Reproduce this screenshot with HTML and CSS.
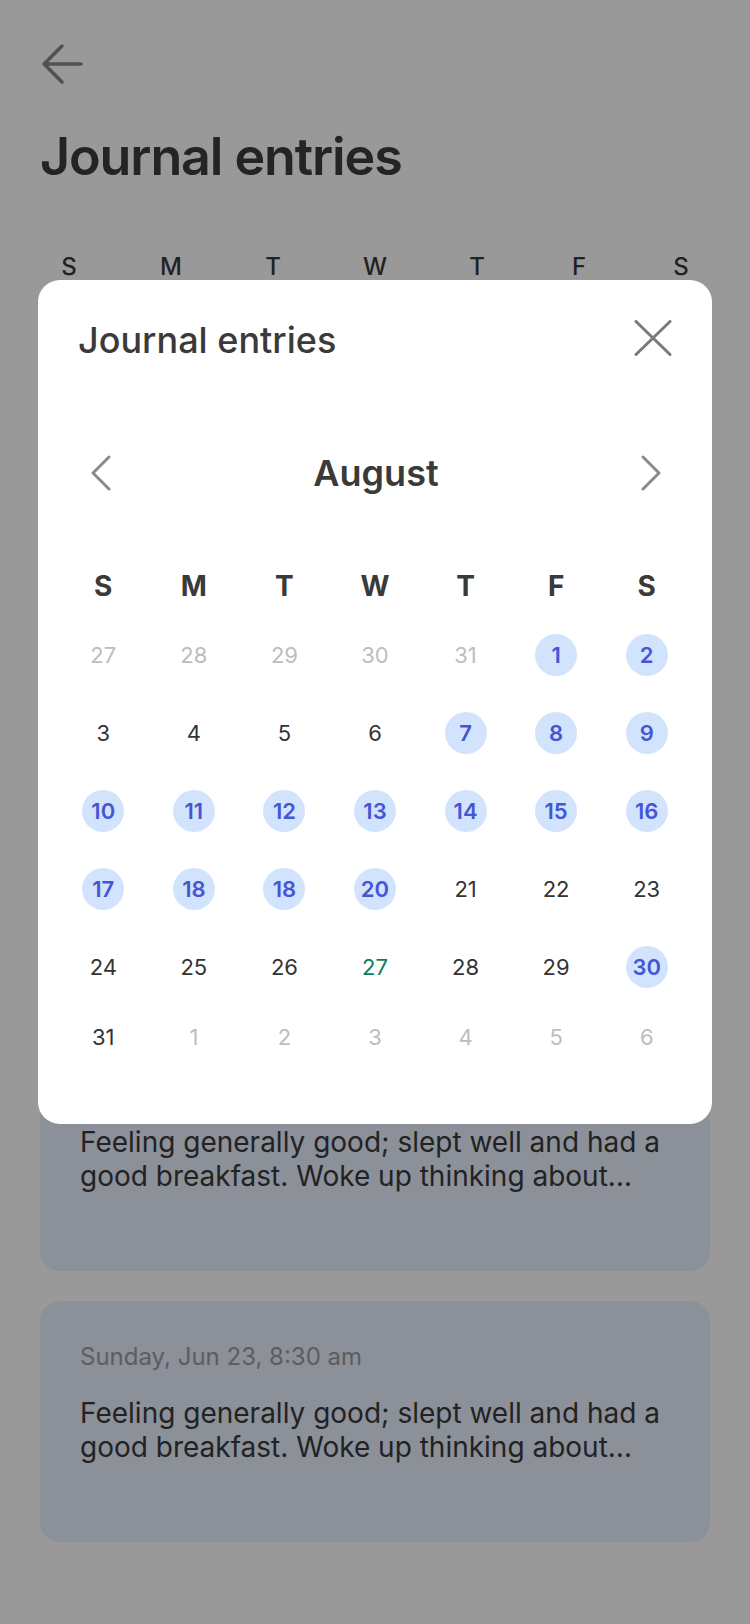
FILE: index.html
```html
<!DOCTYPE html>
<html lang="en">
<head>
<meta charset="utf-8">
<title>Journal entries</title>
<link rel="stylesheet" href="styles.css">
</head>
<body>
<div class="page">
  <header class="topbar">
    <button class="icon-btn back" aria-label="Back">
      <svg width="48" height="48" viewBox="0 0 48 48" fill="none" stroke="currentColor" stroke-width="3.5" stroke-linecap="round" stroke-linejoin="round"><path d="M22 6 L4 24 L22 42 M4 24 H41"/></svg>
    </button>
  </header>
  <h1 class="title">Journal entries</h1>
  <div class="week">
    <span>S</span><span>M</span><span>T</span><span>W</span><span>T</span><span>F</span><span>S</span>
  </div>
  <section class="entries">
    <article class="entry">
      <p class="entry-date">Monday, Jun 24, 8:45 am</p>
      <p class="entry-text">Feeling generally good; slept well and had a good breakfast. Woke up thinking about…</p>
    </article>
    <article class="entry">
      <p class="entry-date">Sunday, Jun 23, 8:30 am</p>
      <p class="entry-text">Feeling generally good; slept well and had a good breakfast. Woke up thinking about…</p>
    </article>
  </section>
</div>

<div class="scrim"></div>

<div class="modal" role="dialog" aria-label="Journal entries">
  <div class="modal-head">
    <h2 class="modal-title">Journal entries</h2>
    <button class="icon-btn close" aria-label="Close">
      <svg width="38" height="36" viewBox="0 0 38 36" fill="none" stroke="currentColor" stroke-width="3" stroke-linecap="round"><path d="M2 1.5 L36 34.5 M36 1.5 L2 34.5"/></svg>
    </button>
  </div>
  <div class="month-nav">
    <button class="icon-btn chev" aria-label="Previous month">
      <svg width="22" height="36" viewBox="0 0 22 36" fill="none" stroke="currentColor" stroke-width="3" stroke-linecap="round" stroke-linejoin="round"><path d="M19 2 L3 18 L19 34"/></svg>
    </button>
    <div class="month">August</div>
    <button class="icon-btn chev" aria-label="Next month">
      <svg width="22" height="36" viewBox="0 0 22 36" fill="none" stroke="currentColor" stroke-width="3" stroke-linecap="round" stroke-linejoin="round"><path d="M3 2 L19 18 L3 34"/></svg>
    </button>
  </div>
  <div class="cal-head">
    <span>S</span><span>M</span><span>T</span><span>W</span><span>T</span><span>F</span><span>S</span>
  </div>
  <div class="cal-grid">
    <span class="day muted">27</span><span class="day muted">28</span><span class="day muted">29</span><span class="day muted">30</span><span class="day muted">31</span><span class="day has">1</span><span class="day has">2</span>
    <span class="day">3</span><span class="day">4</span><span class="day">5</span><span class="day">6</span><span class="day has">7</span><span class="day has">8</span><span class="day has">9</span>
    <span class="day has">10</span><span class="day has">11</span><span class="day has">12</span><span class="day has">13</span><span class="day has">14</span><span class="day has">15</span><span class="day has">16</span>
    <span class="day has">17</span><span class="day has">18</span><span class="day has">18</span><span class="day has">20</span><span class="day">21</span><span class="day">22</span><span class="day">23</span>
    <span class="day">24</span><span class="day">25</span><span class="day">26</span><span class="day today">27</span><span class="day">28</span><span class="day">29</span><span class="day has">30</span>
    <span class="day">31</span><span class="day muted">1</span><span class="day muted">2</span><span class="day muted">3</span><span class="day muted">4</span><span class="day muted">5</span><span class="day muted">6</span>
  </div>
</div>
</body>
</html>
```

FILE: styles.css
```css
* { box-sizing: border-box; }

html, body {
  margin: 0;
  padding: 0;
}

body {
  background: #ffffff;
  font-family: "Inter", "Noto Sans", "Liberation Sans", sans-serif;
  color: #3a3a3a;
  width: 750px;
  height: 1624px;
  overflow: hidden;
}

.icon-btn {
  background: none;
  border: 0;
  padding: 0;
  margin: 0;
  display: flex;
  align-items: center;
  justify-content: center;
  cursor: pointer;
}

.page {
  padding: 40px 40px 0 40px;
}

.topbar {
  display: flex;
  height: 48px;
}

.back {
  color: #888888;
  width: 48px;
  height: 48px;
}

.title {
  margin: 37px 0 0 0;
  font-size: 52px;
  line-height: 64px;
  font-weight: 600;
  color: #3c3c3c;
  letter-spacing: -1.1px;
}

.week {
  display: grid;
  grid-template-columns: repeat(7, 1fr);
  margin: 63px -22px 0 -22px;
  text-align: center;
  font-size: 24px;
  line-height: 29px;
  font-weight: 500;
  color: #3a3a3a;
}

.entries {
  display: flex;
  flex-direction: column;
  gap: 30px;
  margin-top: 749px;
}

.entry {
  background: #e9f0ff;
  border-radius: 20px;
  min-height: 241px;
  padding: 41px 40px 40px 40px;
}

.entry-date {
  margin: 0;
  font-size: 24px;
  line-height: 29px;
  color: #9a9ca2;
}

.entry-text {
  margin: 25px 0 0 0;
  font-size: 28px;
  line-height: 34px;
  color: #3a3a3a;
}

.scrim {
  position: fixed;
  inset: 0;
  background: rgba(0, 0, 0, 0.4);
}

.modal {
  position: fixed;
  left: 38px;
  top: 280px;
  width: 674px;
  height: 844px;
  background: #ffffff;
  border-radius: 22px;
  padding: 38px 20px 0 20px;
}

.modal-head {
  display: flex;
  align-items: center;
  justify-content: space-between;
  padding: 0 20px;
}

.modal-title {
  margin: 0;
  font-size: 36px;
  line-height: 44px;
  font-weight: 500;
  color: #3a3a3a;
}

.close {
  color: #7a7a7a;
  margin-top: -4px;
}

.month-nav {
  display: flex;
  align-items: center;
  justify-content: space-between;
  margin-top: 89px;
  padding: 0 30px 0 32px;
}

.chev {
  color: #8a8a8a;
  width: 22px;
  height: 36px;
}

.month {
  font-size: 36px;
  line-height: 44px;
  font-weight: 600;
  color: #3a3a3a;
}

.cal-head,
.cal-grid {
  display: grid;
  grid-template-columns: repeat(7, 1fr);
  justify-items: center;
}

.cal-head {
  margin-top: 74px;
  font-size: 28px;
  line-height: 34px;
  font-weight: 700;
  color: #3a3a3a;
}

.cal-grid {
  margin-top: 31px;
  row-gap: 36px;
  align-items: center;
}

.day {
  font-size: 22px;
  line-height: 27px;
  color: #333333;
  display: flex;
  align-items: center;
  justify-content: center;
}

.day.muted {
  color: #bdbdbd;
}

.day.today {
  color: #0c7d5d;
}

.day.has {
  width: 42px;
  height: 42px;
  border-radius: 50%;
  background: #d2e3fd;
  color: #4556d4;
  font-weight: 600;
}
```
